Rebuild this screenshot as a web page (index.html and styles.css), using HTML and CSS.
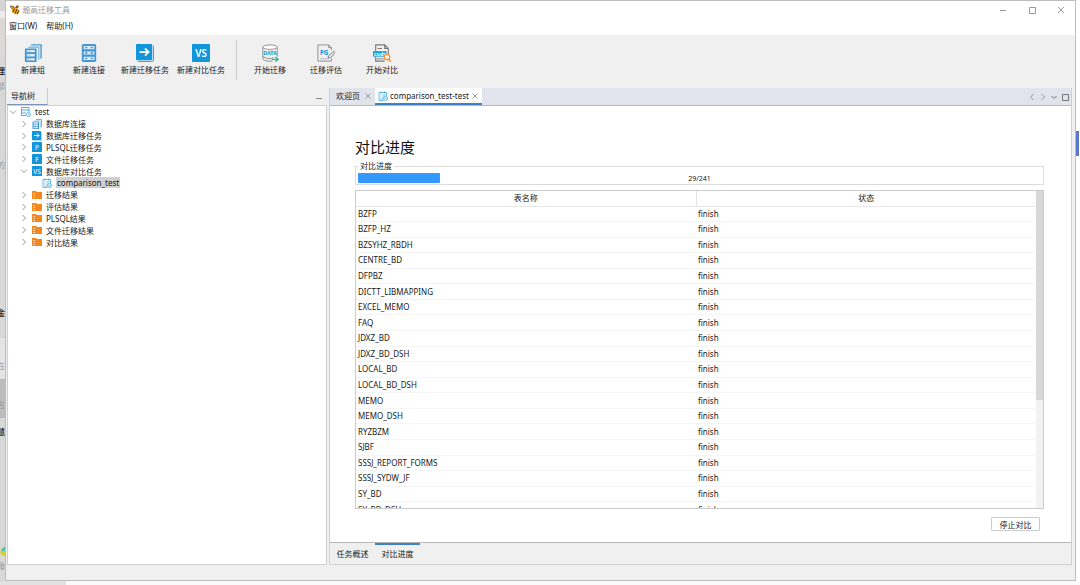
FILE: index.html
```html
<!DOCTYPE html>
<html lang="zh-CN">
<head>
    <meta charset="UTF-8">
    <meta name="viewport" content="width=device-width, initial-scale=1.0">
    <title>瀚高迁移工具</title>
    <link rel="stylesheet" href="styles.css">
</head>
<body>
    <!-- shared icons -->
    <svg class="defs" width="0" height="0" aria-hidden="true">
        <symbol id="i-group" viewBox="0 0 20 20">
            <path d="M8 1h11v15" fill="none" stroke="#4d9cd4" stroke-width="1.6"/>
            <path d="M5 3.500h11.500v14" fill="none" stroke="#6fb0dd" stroke-width="1.2"/>
            <rect x="1" y="5" width="13" height="15" rx="1" fill="#3f93d0"/>
            <path d="M3 8h9M3 12.500h9M3 17h9" stroke="#e4f1fa" stroke-width="2.6"/>
            <path d="M3 8h5M3 12.500h4M3 17h5" stroke="#9ccbea"/>
        </symbol>
        <symbol id="i-conn" viewBox="0 0 20 20">
            <rect x="2" y="0" width="16" height="20" rx="2" fill="#4596d2"/>
            <path d="M4 4h12M4 10h12M4 16h12" stroke="#d9ecf8" stroke-width="3.6"/>
            <path d="M6 4h2M12 4h2M6 10h2M12 10h2M6 16h2M12 16h2" stroke="#2f83c2" stroke-width="1.5"/>
        </symbol>
        <symbol id="i-move" viewBox="0 0 20 20">
            <path d="M19.500 2v15.500q0 2-2 2H2" fill="none" stroke="#1296db" stroke-width="1"/>
            <rect width="18" height="18" rx="1" fill="#1296db"/>
            <path d="M4 9h10M10 5l4 4-4 4" fill="none" stroke="#fff" stroke-width="2"/>
        </symbol>
        <symbol id="i-blank" viewBox="0 0 20 20">
            <rect width="20" height="20" rx="1" fill="#1296db"/>
        </symbol>
        <symbol id="i-folder" viewBox="0 0 20 20">
            <path d="M0 2h8l2 2h10v14H0z" fill="#f5871f"/>
            <path d="M3 7h3M3 11h3M3 15h3" stroke="#fde3c8" stroke-width="2"/>
        </symbol>
        <symbol id="i-db" viewBox="0 0 20 20">
            <path d="M10 17H1V1h15v9M1 6h15M1 12h9" fill="none" stroke="#38a8e0" stroke-width="1.8"/>
            <circle cx="15" cy="15" r="4" fill="#fff" stroke="#38a8e0" stroke-width="1.6"/>
            <path d="M15 13v2h2" fill="none" stroke="#38a8e0"/>
        </symbol>
        <symbol id="i-task" viewBox="0 0 20 20">
            <path d="M11 19H2V3h15v8" fill="none" stroke="#38a8e0" stroke-width="1.6"/>
            <path d="M6 1v4M13 1v4M5 8h2M9 8h6M5 12h2M9 12h3M5 16h5" stroke="#38a8e0" stroke-width="1.6"/>
            <circle cx="15" cy="15" r="4" fill="#fff" stroke="#38a8e0" stroke-width="1.6"/>
            <path d="M13 15h4" stroke="#38a8e0" stroke-width="1.5"/>
        </symbol>
        <symbol id="i-arrow" viewBox="0 0 8 8">
            <path d="M2.500 1l3 3-3 3" fill="none" stroke="#999"/>
        </symbol>
    </svg>

    <!-- window lying behind on the left -->
    <div class="behind-left" aria-hidden="true">
        <b class="s1">理</b>
        <span class="s2">部</span>
        <i class="s3">、</i>
        <span class="s4">的</span>
        <b class="s5">金</b>
        <span class="s6">在</span>
        <span class="s7">名</span>
        <b class="s8">慧</b>
        <svg class="fish" viewBox="0 0 5 11"><path d="M5 1v9Q1 9 0 6q2-5 5-5" fill="#d6d02c"/><path d="M5 1v4H1q2-4 4-4" fill="#4bbfc4"/></svg>
        <span class="s9">微</span>
    </div>

    <div class="window">
        <header class="titlebar">
            <svg class="app-icon" viewBox="0 0 20 20">
                <ellipse cx="5" cy="5" rx="5" ry="3" fill="#5a3c1c" transform="rotate(35 5 5)"/>
                <ellipse cx="14" cy="4" rx="4" ry="2.500" fill="#7c5b30" transform="rotate(-40 14 4)"/>
                <ellipse cx="11" cy="12" rx="8" ry="6" fill="#f2a91c" transform="rotate(25 11 12)"/>
                <path d="M9 7l-3 7M14 8l-4 9M18 11l-4 7" stroke="#33261a" stroke-width="1.8"/>
                <circle cx="4" cy="5" r="2.500" fill="#e59a1b"/>
            </svg>
            <h1>瀚高迁移工具</h1>
            <div class="win-buttons">
                <button aria-label="最小化"><svg viewBox="0 0 8 8"><path d="M1 4.500h6"/></svg></button>
                <button aria-label="最大化"><svg viewBox="0 0 8 8"><path d="M1.500 1.500h6v6h-6z"/></svg></button>
                <button aria-label="关闭"><svg viewBox="0 0 8 8"><path d="M1 1l6 6M7 1l-6 6"/></svg></button>
            </div>
        </header>

        <nav class="menubar">
            <button>窗口(W)</button>
            <button>帮助(H)</button>
        </nav>

        <div class="toolbar">
            <button><svg><use href="#i-group"/></svg>新建组</button>
            <button><svg><use href="#i-conn"/></svg>新建连接</button>
            <button><svg><use href="#i-move"/></svg>新建迁移任务</button>
            <button><svg viewBox="0 0 20 20"><use href="#i-blank"/><text x="10" y="14" class="vs">VS</text></svg>新建对比任务</button>
            <span class="divider"></span>
            <button>
                <svg viewBox="0 0 20 20">
                    <path d="M2 4v12q0 3 8 3h3M18 4v10" fill="none" stroke="#888"/>
                    <ellipse cx="10" cy="3.500" rx="8" ry="2.500" fill="#fff" stroke="#888"/>
                    <path d="M2 14q8 4 12 1" fill="none" stroke="#888"/>
                    <text x="10" y="12" class="tag">DATA</text>
                    <path d="M12 17h6M16 14.500l3 2.500-3 2.500" fill="none" stroke="#2dbb8a" stroke-width="1.5"/>
                </svg>开始迁移
            </button>
            <button>
                <svg viewBox="0 0 20 20">
                    <path d="M16 16v3H1V1h12l3 3v3M13 1v3h3" fill="none" stroke="#888"/>
                    <text x="8" y="12" class="tag pg">PG</text>
                    <path d="M4 16.500h7" stroke="#888" stroke-dasharray="1.5 1"/>
                    <path d="M12 16l1-3 6-5 1.500 2-5.500 5z" fill="#eee" stroke="#777"/>
                </svg>迁移评估
            </button>
            <button>
                <svg viewBox="0 0 20 20">
                    <path d="M3 8V1h10l4 4v6M13 1v4h4M3 14v5h10M5 5h5" fill="none" stroke="#777" stroke-width="1.2"/>
                    <path d="M0 8h15v6H0z" fill="#1296db"/>
                    <text x="8" y="13" class="tag code">code</text>
                    <path d="M4 16.500h8" stroke="#777"/>
                    <circle cx="15.500" cy="14.500" r="3" fill="#fff" stroke="#fb8c2e" stroke-width="1.4"/>
                    <path d="M17.500 17l2.500 3" stroke="#fb8c2e" stroke-width="1.8"/>
                </svg>开始对比
            </button>
        </div>

        <div class="workbench">
            <aside class="nav-panel">
                <div class="nav-head">
                    <span class="nav-title">导航树</span>
                    <button class="minimize" aria-label="最小化"></button>
                </div>
                <div class="tree-box">
                    <ul class="tree">
                        <li><svg class="arrow open"><use href="#i-arrow"/></svg><svg class="ico"><use href="#i-db"/></svg>test</li>
                        <li class="l1"><svg class="arrow"><use href="#i-arrow"/></svg><svg class="ico"><use href="#i-group"/></svg>数据库连接</li>
                        <li class="l1"><svg class="arrow"><use href="#i-arrow"/></svg><svg class="ico"><use href="#i-move"/></svg>数据库迁移任务</li>
                        <li class="l1"><svg class="arrow"><use href="#i-arrow"/></svg><svg class="ico" viewBox="0 0 20 20"><use href="#i-blank"/><text x="10" y="15" class="letter">P</text></svg>PLSQL迁移任务</li>
                        <li class="l1"><svg class="arrow"><use href="#i-arrow"/></svg><svg class="ico" viewBox="0 0 20 20"><use href="#i-blank"/><text x="10" y="15" class="letter">F</text></svg>文件迁移任务</li>
                        <li class="l1"><svg class="arrow open"><use href="#i-arrow"/></svg><svg class="ico" viewBox="0 0 20 20"><use href="#i-blank"/><text x="10" y="15" class="letter">VS</text></svg>数据库对比任务</li>
                        <li class="l2"><svg class="ico"><use href="#i-task"/></svg><span class="selected">comparison_test</span></li>
                        <li class="l1"><svg class="arrow"><use href="#i-arrow"/></svg><svg class="ico"><use href="#i-folder"/></svg>迁移结果</li>
                        <li class="l1"><svg class="arrow"><use href="#i-arrow"/></svg><svg class="ico"><use href="#i-folder"/></svg>评估结果</li>
                        <li class="l1"><svg class="arrow"><use href="#i-arrow"/></svg><svg class="ico"><use href="#i-folder"/></svg>PLSQL结果</li>
                        <li class="l1"><svg class="arrow"><use href="#i-arrow"/></svg><svg class="ico"><use href="#i-folder"/></svg>文件迁移结果</li>
                        <li class="l1"><svg class="arrow"><use href="#i-arrow"/></svg><svg class="ico"><use href="#i-folder"/></svg>对比结果</li>
                    </ul>
                </div>
            </aside>

            <main class="editor">
                <div class="tabs">
                    <button class="tab">欢迎页<svg class="close" viewBox="0 0 8 8"><path d="M1.500 1.500l5 5M6.500 1.500l-5 5"/></svg></button>
                    <button class="tab active"><svg class="ico"><use href="#i-task"/></svg>comparison_test-test<svg class="close" viewBox="0 0 8 8"><path d="M1.500 1.500l5 5M6.500 1.500l-5 5"/></svg></button>
                    <div class="tab-tools">
                        <button aria-label="上一个"><svg viewBox="0 0 8 8"><path d="M5.500 1l-3 3 3 3"/></svg></button>
                        <button aria-label="下一个"><svg viewBox="0 0 8 8"><path d="M2.500 1l3 3-3 3"/></svg></button>
                        <button class="dark" aria-label="列表"><svg viewBox="0 0 8 8"><path d="M1.500 3l2.500 2.500 2.500-2.500"/></svg></button>
                        <button class="dark" aria-label="最大化"><svg viewBox="0 0 8 8"><path d="M1.500 1.500h6v6h-6z"/></svg></button>
                    </div>
                </div>

                <section class="page">
                    <h2>对比进度</h2>
                    <fieldset>
                        <legend>对比进度</legend>
                        <progress value="29" max="241" aria-label="对比进度"></progress>
                        <span class="count">29/241</span>
                    </fieldset>
                    <div class="table-box">
                        <div class="table-clip">
                            <table>
                                <thead>
                                    <tr><th>表名称</th><th>状态</th></tr>
                                </thead>
                                <tbody>
                                    <tr><td>BZFP</td><td>finish</td></tr>
                                    <tr><td>BZFP_HZ</td><td>finish</td></tr>
                                    <tr><td>BZSYHZ_RBDH</td><td>finish</td></tr>
                                    <tr><td>CENTRE_BD</td><td>finish</td></tr>
                                    <tr><td>DFPBZ</td><td>finish</td></tr>
                                    <tr><td>DICTT_LIBMAPPING</td><td>finish</td></tr>
                                    <tr><td>EXCEL_MEMO</td><td>finish</td></tr>
                                    <tr><td>FAQ</td><td>finish</td></tr>
                                    <tr><td>JDXZ_BD</td><td>finish</td></tr>
                                    <tr><td>JDXZ_BD_DSH</td><td>finish</td></tr>
                                    <tr><td>LOCAL_BD</td><td>finish</td></tr>
                                    <tr><td>LOCAL_BD_DSH</td><td>finish</td></tr>
                                    <tr><td>MEMO</td><td>finish</td></tr>
                                    <tr><td>MEMO_DSH</td><td>finish</td></tr>
                                    <tr><td>RYZBZM</td><td>finish</td></tr>
                                    <tr><td>SJBF</td><td>finish</td></tr>
                                    <tr><td>SSSJ_REPORT_FORMS</td><td>finish</td></tr>
                                    <tr><td>SSSJ_SYDW_JF</td><td>finish</td></tr>
                                    <tr><td>SY_BD</td><td>finish</td></tr>
                                    <tr><td>SY_BD_DSH</td><td>finish</td></tr>
                                </tbody>
                            </table>
                        </div>
                        <div class="scrollbar"><div class="thumb"></div></div>
                    </div>
                    <div class="actions"><button class="stop">停止对比</button></div>
                </section>

                <div class="page-tabs">
                    <button>任务概述</button>
                    <button class="active">对比进度</button>
                </div>
            </main>
        </div>
        <footer class="status"></footer>
    </div>

    <div class="behind-right" aria-hidden="true"><div class="mark"></div></div>
    <div class="behind-bottom" aria-hidden="true"></div>
</body>
</html>
```
FILE: styles.css
```css
*, *:before, *:after {
    box-sizing: border-box;
}
body {
    margin: 0;
    height: 100vh;
    display: grid;
    grid-template-columns: 5px 1fr 4px;
    grid-template-rows: 1fr 4px;
    overflow: hidden;
    background: #fff;
    color: #1a1a1a;
    font: 8px/12px "Noto Sans", "Noto Sans CJK SC", sans-serif;
}
button {
    font: inherit;
    color: inherit;
    background: none;
    border: none;
    padding: 0;
    white-space: nowrap;
}
svg {
    display: block;
    flex: none;
}
.defs {
    position: absolute;
}
h1, h2, ul {
    margin: 0;
    padding: 0;
    font-weight: normal;
}

/* windows behind */
.behind-left {
    display: flex;
    flex-direction: column;
    align-items: flex-end;
    overflow: hidden;
    color: #999;
    background: linear-gradient(#d4d4d4 11px, #ececec 11px 18px, #dcd8d7 18px 60px, #d8d8d8 60px 338px, #e4e4e4 338px 379px, #bcbcbc 379px 418px, #d8d8d8 418px);
}
.behind-left b { color: #333; }
.behind-left i { color: #2b6fc0; font-style: normal; }
.s1 { margin-top: 65px; }
.s2 { margin-top: 3px; }
.s3 { margin-top: 55px; }
.s5 { margin-top: 136px; }
.s6 { margin-top: 41px; }
.s7 { margin-top: 27px; }
.s8 { margin-top: 15px; }
.fish {
    width: 5px;
    height: 11px;
    margin-top: 108px;
}
.s9 { margin-top: 3px; }
.behind-right {
    padding-top: 131px;
    background: #fff;
}
.mark {
    height: 25px;
    width: 3px;
    background: #5b78c8;
}
.behind-bottom {
    grid-column: 1 / -1;
    background: linear-gradient(90deg, #e2e2e2 66px, #fafafa 66px);
}

/* main window */
.window {
    display: flex;
    flex-direction: column;
    min-width: 0;
    min-height: 0;
    background: #f0f0f0;
    border: 1px solid #bdbdbd;
}
.titlebar {
    display: flex;
    align-items: center;
    height: 17px;
    padding: 0 10px 0 4px;
    gap: 2px;
    background: #fff;
}
.app-icon {
    width: 10px;
    height: 10px;
}
h1 {
    font-size: 8px;
    color: #999;
}
.win-buttons {
    display: flex;
    gap: 21px;
    margin-left: auto;
}
.win-buttons svg, .tab-tools svg, .close {
    width: 8px;
    height: 8px;
    fill: none;
    stroke: #999;
}
.menubar {
    display: flex;
    gap: 9px;
    height: 17px;
    padding: 0 3px;
    background: #fff;
}
.menubar button {
    height: 15px;
}
.toolbar {
    display: flex;
    height: 53px;
    padding-bottom: 3px;
    align-items: center;
}
.toolbar button {
    width: 56px;
    display: flex;
    flex-direction: column;
    align-items: center;
    gap: 2px;
    padding-right: 2px;
}
.toolbar svg {
    width: 18px;
    height: 18px;
}
.divider {
    width: 1px;
    height: 40px;
    margin: 0 6px;
    background: #c8c8c8;
}
svg text {
    text-anchor: middle;
    fill: #fff;
}
.vs { font-size: 11px; font-weight: 600; }
.letter { font-size: 13px; }
svg .tag { font-size: 6px; font-weight: bold; fill: #1296db; }
svg .pg { font-size: 7px; }
svg .code { fill: #fff; }

.workbench {
    flex: 1;
    min-height: 0;
    display: flex;
    gap: 2px;
    padding: 0 3px 0 1px;
}
.nav-panel {
    width: 320px;
    display: flex;
    flex-direction: column;
}
.nav-head {
    display: flex;
    height: 17px;
    justify-content: space-between;
}
.nav-title {
    width: 41px;
    padding: 2px 4px;
    border-right: 1px solid #ccc;
    border-bottom: 1px solid #7d94b5;
}
.minimize {
    width: 6px;
    height: 11px;
    margin-right: 5px;
    border-bottom: 1px solid #888;
}
.tree-box {
    flex: 1;
    background: #fff;
    border: 1px solid #d0d0d0;
}
.tree {
    display: grid;
    grid-auto-rows: 1fr;
    height: 142px;
    list-style: none;
}
.tree li {
    display: flex;
    align-items: center;
    min-height: 0;
    gap: 4px;
    padding-left: 1px;
    line-height: 11px;
}
.tree li.l1 { padding-left: 12px; }
.tree li.l2 { padding-left: 34px; }
.arrow {
    width: 8px;
    height: 8px;
}
.open {
    transform: rotate(90deg);
}
.ico {
    width: 10px;
    height: 10px;
}
.selected {
    padding: 0 1px;
    background: #d0d0d0;
}

.editor {
    flex: 1;
    min-width: 0;
    display: flex;
    flex-direction: column;
    border: 1px solid #d0d0d0;
    border-top: none;
}
.tabs {
    display: flex;
    height: 18px;
    background: #e1e4ec;
    border-bottom: 1px solid #b8b8b8;
}
.tab {
    display: flex;
    align-items: center;
    gap: 4px;
    padding: 0 3px 2px 6px;
}
.tab.active {
    gap: 2px;
    padding: 0 3px;
    background: #fff;
    border-bottom: 2px solid #3d82c9;
}
.tab-tools {
    display: flex;
    align-items: center;
    gap: 3px;
    margin-left: auto;
    padding-right: 2px;
}
.tab-tools .dark svg { stroke: #777; }
.page {
    flex: 1;
    min-height: 0;
    display: flex;
    flex-direction: column;
    padding: 29px 27px 11px 25px;
    background: #fff;
    border-bottom: 1px solid #b8b8b8;
}
h2 {
    font-size: 15px;
    line-height: 24px;
    color: #111;
}
fieldset {
    position: relative;
    margin: 1px 0 0;
    padding: 1px 2px;
    border: 1px solid #dcdcdc;
    min-width: 0;
}
legend {
    margin-left: 0;
    padding: 0 2px;
}
progress {
    display: block;
    width: 100%;
    height: 10px;
    appearance: none;
    border: none;
}
progress::-webkit-progress-bar { background: #fff; }
progress::-webkit-progress-value { background: #3399ff; border-radius: 1px; }
.count {
    position: absolute;
    inset: 1px 0 0;
    text-align: center;
    font-size: 7px;
}
.table-box {
    display: flex;
    flex: 1;
    min-height: 0;
    margin-top: 5px;
    border: 1px solid #ccc;
}
.table-clip {
    flex: 1;
    overflow: hidden;
}
table {
    width: 100%;
    height: 327px;
    border-collapse: collapse;
    table-layout: fixed;
}
thead tr {
    height: 15px;
}
th, td {
    padding: 0 2px;
    text-align: left;
    border-bottom: 1px solid #f5f5f5;
}
th {
    text-align: center;
    font-weight: normal;
    border-bottom-color: #e8e8e8;
}
th:first-child {
    border-right: 1px solid #e4e4e4;
}
.scrollbar {
    width: 7px;
    background: #f2f2f2;
}
.thumb {
    height: 66%;
    background: #d8d8d8;
}
.actions {
    display: flex;
    justify-content: flex-end;
    padding: 8px 4px 0 0;
}
.stop {
    width: 49px;
    height: 14px;
    line-height: 11px;
    border: 1px solid #ccc;
    border-radius: 1px;
    background: #fff;
}
.page-tabs {
    display: flex;
    height: 21px;
}
.page-tabs button {
    width: 45px;
    padding-bottom: 2px;
    border-top: 2px solid transparent;
}
.page-tabs .active {
    border-color: #3d82c9;
}
.status {
    height: 15px;
}
```
